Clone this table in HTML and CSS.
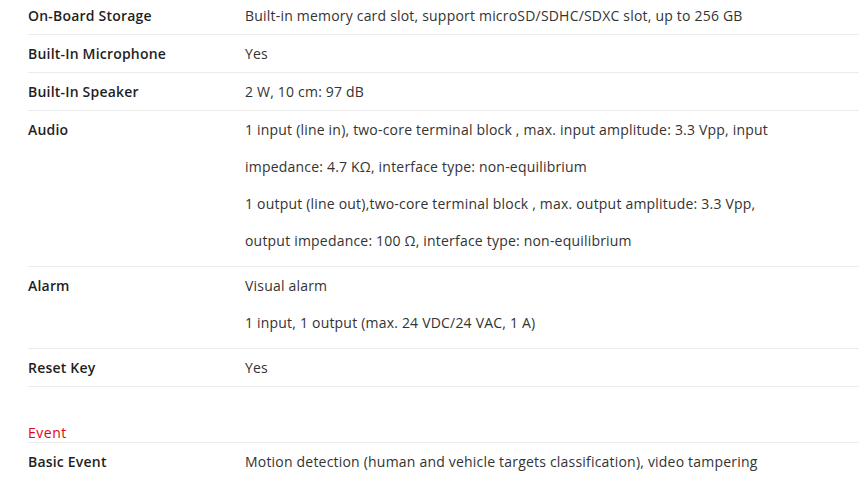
FILE: index.html
```html
<!DOCTYPE html>
<html lang="en">
<head>
<meta charset="utf-8">
<title>Specifications</title>
<link rel="stylesheet" href="styles.css">
</head>
<body>
<div class="specs">
  <div class="row">
    <div class="label">On-Board Storage</div>
    <div class="value"><p>Built-in memory card slot, support microSD/SDHC/SDXC slot, up to 256 GB</p></div>
  </div>
  <div class="row">
    <div class="label">Built-In Microphone</div>
    <div class="value"><p>Yes</p></div>
  </div>
  <div class="row">
    <div class="label">Built-In Speaker</div>
    <div class="value"><p>2 W, 10 cm: 97 dB</p></div>
  </div>
  <div class="row multi">
    <div class="label">Audio</div>
    <div class="value">
      <p>1 input (line in), two-core terminal block , max. input amplitude: 3.3 Vpp, input<br>impedance: 4.7 KΩ, interface type: non-equilibrium</p>
      <p>1 output (line out),two-core terminal block , max. output amplitude: 3.3 Vpp,<br>output impedance: 100 Ω, interface type: non-equilibrium</p>
    </div>
  </div>
  <div class="row multi">
    <div class="label">Alarm</div>
    <div class="value">
      <p>Visual alarm</p>
      <p>1 input, 1 output (max. 24 VDC/24 VAC, 1 A)</p>
    </div>
  </div>
  <div class="row">
    <div class="label">Reset Key</div>
    <div class="value"><p>Yes</p></div>
  </div>

  <h3 class="section">Event</h3>
  <div class="row multi">
    <div class="label">Basic Event</div>
    <div class="value"><p>Motion detection (human and vehicle targets classification), video tampering</p></div>
  </div>
</div>
</body>
</html>
```

FILE: styles.css
```css
html, body {
  margin: 0;
  padding: 0;
  background: #ffffff;
}

body {
  font-family: "Open Sans", "Liberation Sans", sans-serif;
  font-size: 14px;
  letter-spacing: 0.2px;
  color: #333333;
  overflow: hidden;
}

.specs {
  margin: -3px 0 0 28px;
  width: 831px;
}

.row {
  display: flex;
  border-bottom: 1px solid #ebebeb;
  line-height: 37px;
}

.row.multi {
  padding-bottom: 7px;
}

.label {
  flex: 0 0 217px;
  font-weight: 600;
  color: #1f1f1f;
}

.value {
  flex: 1;
}

.value p {
  margin: 0;
}

.section {
  margin: 36px 0 0 0;
  font-size: 14px;
  font-weight: 400;
  line-height: 19px;
  letter-spacing: 0.5px;
  color: #e60012;
  border-bottom: 1px solid #ebebeb;
}
```
